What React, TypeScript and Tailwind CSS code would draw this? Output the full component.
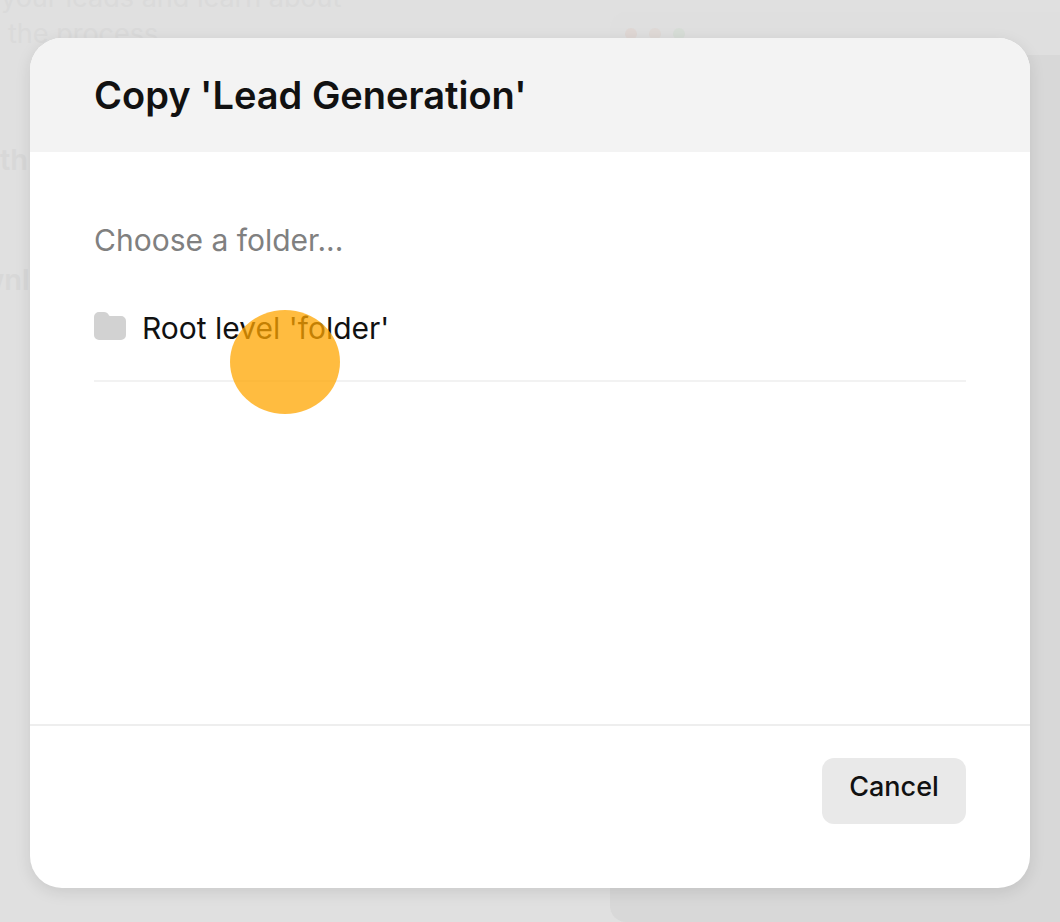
import { useState } from 'react';

const folders = [{ id: 'root', name: "Root level 'folder'" }];

const FolderIcon = () => (
  <svg viewBox="0 0 32 28" className="mb-1 h-7 w-8 shrink-0 fill-[#d2d2d2]" aria-hidden="true">
    <path d="M0 5a5 5 0 0 1 5-5h5c2.200 0 3.600.9 4.500 2.600l.3.600c.3.600.700.8 1.300.8H27a5 5 0 0 1 5 5v14a5 5 0 0 1-5 5H5a5 5 0 0 1-5-5z" />
  </svg>
);

// Dimmed page that shows around the edges of the dialog
const PageBehind = () => (
  <div
    className="absolute inset-0 flex overflow-hidden bg-[#e0e0e0] text-[27px] leading-9 text-[#dadada]"
    aria-hidden="true"
  >
    <div className="w-[610px] shrink-0 whitespace-nowrap">
      <p className="-mt-5 pl-px">your leads and learn about</p>
      <p className="pl-2">the process</p>
      <p className="mt-[90px] text-[29px] font-semibold text-[#d8d8d8]">th</p>
      <p className="-ml-5 mt-[84px] text-[29px] font-semibold text-[#d8d8d8]">wnl</p>
    </div>
    <div className="mt-3 flex flex-1 flex-col overflow-hidden rounded-l-2xl bg-[#dfdfdf]">
      <div className="flex h-[43px] shrink-0 items-center gap-3 px-[15px]">
        <span className="size-3 rounded-full bg-[#dfd7d4]" />
        <span className="size-3 rounded-full bg-[#dfd9d6]" />
        <span className="size-3 rounded-full bg-[#d7ddd7]" />
      </div>
      <div className="flex-1 bg-[#d8d8d8]" />
    </div>
  </div>
);

const CopyDialog = () => {
  const [selected, setSelected] = useState('');

  return (
    <section
      role="dialog"
      aria-modal="true"
      aria-labelledby="copy-title"
      className="relative flex flex-1 flex-col overflow-hidden rounded-[32px] bg-white shadow-[0_4px_16px_rgba(0,0,0,0.1)]"
    >
      <header className="bg-[#f3f3f3] px-16 py-8">
        <h1 id="copy-title" className="text-[38px] leading-[50px] font-semibold">
          Copy 'Lead Generation'
        </h1>
      </header>

      <div className="flex-1 px-16 pt-16">
        <p className="text-[30px] leading-12 text-[#808080]">Choose a folder...</p>
        <ul className="mt-4">
          {folders.map((folder) => (
            <li key={folder.id} className="relative border-b-2 border-[#f2f2f2]">
              <button
                type="button"
                aria-pressed={selected === folder.id}
                onClick={() => setSelected(folder.id)}
                className="flex h-[100px] w-full items-center gap-4 pb-1 text-left text-[30px] leading-12"
              >
                <FolderIcon />
                {folder.name}
              </button>
              {/* Click highlight */}
              <span className="pointer-events-none absolute top-[30px] left-[136px] h-[104px] w-[110px] rounded-[50%] bg-[#ffa500]/75" />
            </li>
          ))}
        </ul>
      </div>

      <footer className="flex justify-end border-t-2 border-[#eeeeee] px-16 pt-8 pb-16">
        <button
          type="button"
          className="h-[66px] min-w-36 rounded-xl bg-[#e9e9e9] px-6 pb-2 text-[27px] leading-8 font-medium"
        >
          Cancel
        </button>
      </footer>
    </section>
  );
};

const App = () => (
  <div className="relative flex min-h-screen px-[30px] pt-[38px] pb-[34px] font-['Inter','Liberation_Sans',sans-serif] text-[#111111]">
    <PageBehind />
    <CopyDialog />
  </div>
);

export default App;
